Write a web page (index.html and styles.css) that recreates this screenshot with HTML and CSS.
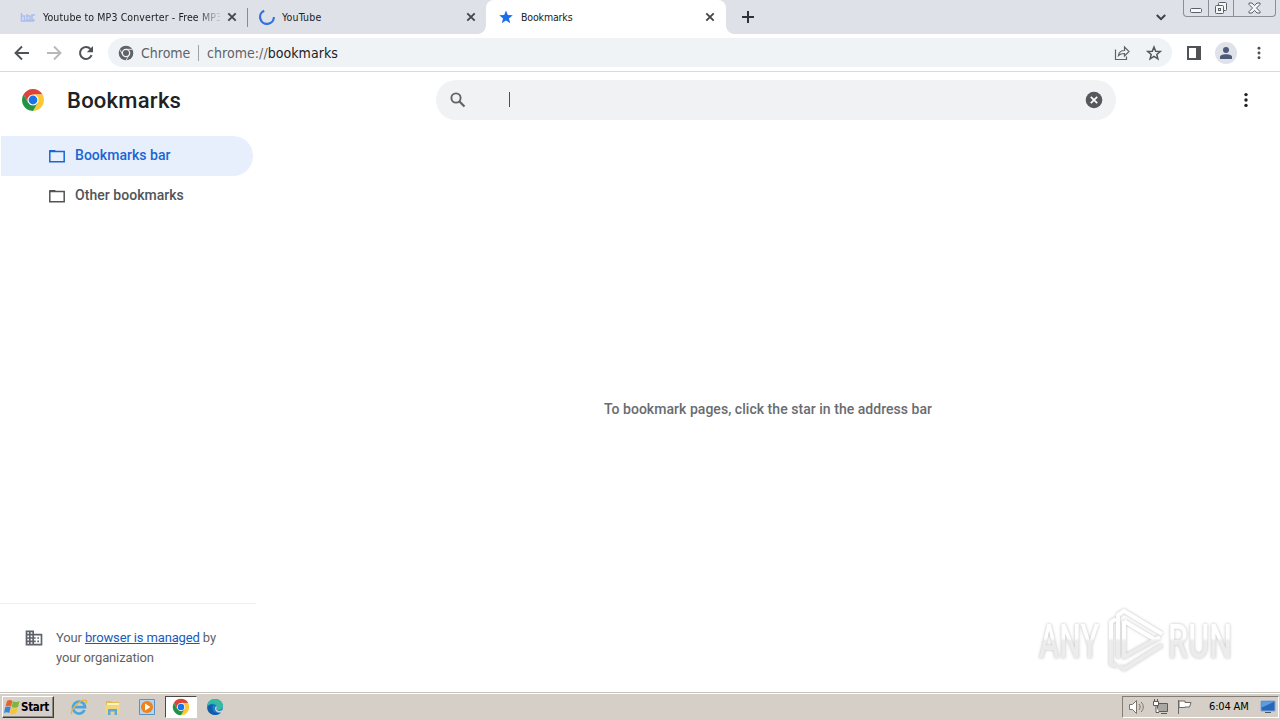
FILE: index.html
```html
<!DOCTYPE html>
<html lang="en">
<head>
  <meta charset="UTF-8">
  <title>Bookmarks</title>
  <link rel="stylesheet" href="styles.css">
</head>
<body>
  <svg class="defs" width="0" height="0">
    <symbol id="close" viewBox="0 0 10 10"><path d="M1.3 1.3l7.4 7.4M8.7 1.3L1.3 8.7" stroke="#45474a" stroke-width="1.9"/></symbol>
    <symbol id="chrome" viewBox="0 0 48 48">
      <circle cx="24" cy="24" r="22" fill="#fff"/>
      <path d="M4.95 13A22 22 0 0 1 43.05 13H24A11 11 0 0 0 14.47 29.5Z" fill="#db4437"/>
      <path d="M4.95 13A22 22 0 0 1 43.05 13H24A11 11 0 0 0 14.47 29.5Z" fill="#fcc934" transform="rotate(120 24 24)"/>
      <path d="M4.95 13A22 22 0 0 1 43.05 13H24A11 11 0 0 0 14.47 29.5Z" fill="#229342" transform="rotate(240 24 24)"/>
      <circle cx="24" cy="24" r="8.8" fill="#1a73e8"/>
    </symbol>
    <symbol id="folder" viewBox="0 0 20 20"><path d="M2.800 5.500h14.400v10.200H2.800z" fill="none" stroke="currentColor" stroke-width="1.500"/><path d="M2 6V4.800C2 4.300 2.400 4 3 4h5l1.600 2z" fill="currentColor"/></symbol>
    <symbol id="dots" viewBox="0 0 4 16"><g fill="currentColor"><circle cx="2" cy="2.6" r="1.7"/><circle cx="2" cy="8" r="1.7"/><circle cx="2" cy="13.4" r="1.7"/></g></symbol>
  </svg>

  <div class="tabstrip">
    <div class="tab first">
      <svg class="favicon" width="16" height="16" viewBox="0 0 16 16"><path d="M1.5 4v8h3V7h-3M7 5v6h3M7 7h3v5M15 6h-3v5h3M1 12h13" fill="none" stroke="#a9bdf0" stroke-width="1.500"/></svg>
      <span class="tab-title fade">Youtube to MP3 Converter - Free MP3</span>
      <svg class="tab-close" width="10" height="10"><use href="#close"/></svg>
    </div>
    <div class="tab second">
      <svg class="favicon" width="16" height="16" viewBox="0 0 16 16"><path d="M5.2 1.7A6.9 6.9 0 1 0 14.9 8" fill="none" stroke="#2f73df" stroke-width="2.200"/></svg>
      <span class="tab-title">YouTube</span>
      <svg class="tab-close" width="10" height="10"><use href="#close"/></svg>
    </div>
    <div class="tab active">
      <svg class="favicon" width="16" height="16" viewBox="0 0 16 16"><path d="M8 1.4l1.8 4.7 5 .2-3.9 3.1 1.4 4.9L8 11.5l-4.3 2.8 1.4-4.9L1.2 6.3l5-.2z" fill="#1a6fee"/></svg>
      <span class="tab-title">Bookmarks</span>
      <svg class="tab-close" width="10" height="10"><use href="#close"/></svg>
    </div>
    <svg class="new-tab" width="12" height="12" viewBox="0 0 12 12"><path d="M6 0v12M0 6h12" stroke="#303236" stroke-width="2"/></svg>
    <svg class="tab-search" width="10" height="7" viewBox="0 0 10 7"><path d="M.8 1l4.2 4.2L9.200 1" fill="none" stroke="#3c4043" stroke-width="2"/></svg>
    <div class="window-buttons">
      <div class="win-btn min"><svg width="13" height="6" viewBox="0 0 13 6"><rect x=".5" y=".5" width="11" height="4" rx="1" fill="#f8f8f9" stroke="#5c5f66"/></svg></div>
      <div class="win-btn max"><svg width="14" height="14" viewBox="0 0 14 14"><g fill="#f4f5f7" stroke="#5c5f66"><rect x="4.500" y="1.500" width="8" height="8" rx="1"/><rect x="1.500" y="4.500" width="8" height="8" rx="1"/><rect x="4.500" y="7.500" width="2" height="2"/></g></svg></div>
      <div class="win-btn shut"><svg width="13" height="12" viewBox="0 0 13 12"><path d="M1 1h3l2.500 2.600L9 1h3v1.500L8.500 6 12 9.500V11H9L6.500 8.400 4 11H1V9.500L4.500 6 1 2.500z" fill="#f4f5f7" stroke="#5c5f66"/></svg></div>
    </div>
  </div>

  <div class="toolbar">
    <svg class="nav back" width="16" height="16" viewBox="0 0 16 16"><path d="M15 8H2M8 1.500L1.500 8 8 14.500" fill="none" stroke="#505356" stroke-width="1.900"/></svg>
    <svg class="nav forward" width="16" height="16" viewBox="0 0 16 16"><path d="M1 8h13M8 1.500L14.500 8 8 14.500" fill="none" stroke="#b7b8ba" stroke-width="1.900"/></svg>
    <svg class="nav reload" width="16" height="16" viewBox="0 0 16 16"><path d="M13.600 10.200A6 6 0 1 1 12.500 4" fill="none" stroke="#505356" stroke-width="2"/><path d="M15 1v6.200H8.800z" fill="#505356"/></svg>
    <div class="omnibox">
      <svg width="16" height="16" viewBox="0 0 48 48"><circle cx="24" cy="24" r="22" fill="#5f6368"/><circle cx="24" cy="24" r="11" fill="none" stroke="#f1f3f4" stroke-width="4"/><path d="M43 13H24M14.500 29.500L5 13M33.500 29.500L24 46" fill="none" stroke="#f1f3f4" stroke-width="2.500"/></svg>
      <span class="scheme">Chrome</span>
      <span class="divider"></span>
      <span class="url">chrome://<b>bookmarks</b></span>
      <svg class="share" width="16" height="16" viewBox="0 0 16 16"><path d="M1.500 4.500v10h11v-3M4.500 10.500c.5-3.500 2.700-5 6-5V2l4.500 4.500-4.500 4.500V8.500c-2.500 0-4.500.4-6 2z" fill="none" stroke="#606266" stroke-width="1.200"/></svg>
      <svg class="star" width="16" height="16" viewBox="0 0 16 16"><path d="M8 2l1.700 4.200 4.500.300-3.400 2.900 1.100 4.400L8 11.400l-3.900 2.400 1.100-4.400-3.400-2.900 4.500-.3z" fill="none" stroke="#54575b" stroke-width="1.500"/></svg>
    </div>
    <svg class="side-panel" width="14" height="14" viewBox="0 0 14 14"><path d="M1 1h12v12H1z" fill="#fff" stroke="#505256" stroke-width="2"/><path d="M9 1h4v12H9z" fill="#505256"/></svg>
    <div class="avatar"><svg width="12" height="12" viewBox="0 0 12 12"><g fill="#4e5a78"><circle cx="6" cy="3" r="3"/><path d="M0 12V10C0 8 3 7.200 6 7.200S12 8 12 10v2z"/></g></svg></div>
    <svg class="menu" width="4" height="14"><use href="#dots"/></svg>
  </div>

  <header class="page-header">
    <svg class="logo" width="24" height="24"><use href="#chrome"/></svg>
    <h1>Bookmarks</h1>
    <div class="search">
      <svg width="16" height="16" viewBox="0 0 16 16"><circle cx="6" cy="6" r="4.600" fill="none" stroke="#606367" stroke-width="1.900"/><path d="M9.200 9.200l5.300 5.300" stroke="#606367" stroke-width="2.200"/></svg>
      <span class="caret"></span>
      <svg class="clear" width="18" height="18" viewBox="0 0 18 18"><circle cx="9" cy="9" r="8.300" fill="#55585c"/><path d="M5.800 5.800l6.400 6.400M12.200 5.800l-6.400 6.400" stroke="#fff" stroke-width="1.700"/></svg>
    </div>
    <svg class="more" width="4" height="16"><use href="#dots"/></svg>
  </header>

  <main class="content">
    <nav class="sidebar">
      <div class="folder selected"><svg width="20" height="20"><use href="#folder"/></svg><span>Bookmarks bar</span></div>
      <div class="folder"><svg width="20" height="20"><use href="#folder"/></svg><span>Other bookmarks</span></div>
      <div class="managed">
        <svg width="20" height="20" viewBox="0 0 24 24"><path d="M12 7V3H2v18h20V7H12zM6 19H4v-2h2v2zm0-4H4v-2h2v2zm0-4H4V9h2v2zm0-4H4V5h2v2zm4 12H8v-2h2v2zm0-4H8v-2h2v2zm0-4H8V9h2v2zm0-4H8V5h2v2zm10 12h-8v-2h2v-2h-2v-2h2v-2h-2V9h8v10zm-2-8h-2v2h2v-2zm0 4h-2v2h2v-2z" fill="#5f6368"/></svg>
        <p>Your <a href="#">browser is managed</a> by<br>your organization</p>
      </div>
    </nav>
    <section class="empty"><span>To bookmark pages, click the star in the address bar</span></section>
  </main>

  <svg class="watermark" width="220" height="72" viewBox="0 0 220 72">
    <defs>
      <linearGradient id="fade" gradientUnits="userSpaceOnUse" x1="0" y1="34" x2="0" y2="37">
        <stop offset="0" stop-color="#fff"/>
        <stop offset="1" stop-color="#ececec"/>
      </linearGradient>
    </defs>
    <g class="mark-text" fill="url(#fade)">
      <text x="9" y="54" textLength="60" lengthAdjust="spacingAndGlyphs">ANY</text>
      <text x="138" y="54" textLength="64" lengthAdjust="spacingAndGlyphs">RUN</text>
    </g>
    <g class="mark-play" stroke="url(#fade)">
      <path d="M86 15L81 18V60L87 62"/>
      <path d="M88 54V11L94 7L132 30M94 17V53L130 33"/>
      <path d="M94 17L124 35"/>
      <path d="M90 62L94 65L132 41"/>
    </g>
  </svg>

  <footer class="taskbar">
    <div class="start">
      <svg width="17" height="16" viewBox="0 0 17 16"><path d="M3 2c2-1.500 4-1 5.500 0L7 7.500C5 6.500 3.500 6.500 1.500 7.500z" fill="#e8632c"/><path d="M9 2.300c2 1 4 1 6.500 0L14 8c-2 1-4 1-6.500 0z" fill="#7cb63c"/><path d="M1.200 8.200c2-1 3.800-1 5.500 0L5.200 14C3.500 13 2 13 0 14z" fill="#3b84d6"/><path d="M7.200 8.700c2 1 4 1 6.500 0l-1.600 5.800c-2 1-4 1-6.400 0z" fill="#f5c631"/></svg>
      <span>Start</span>
    </div>
    <div class="quick">
      <div class="task"><svg width="18" height="18" viewBox="0 0 18 18"><path d="M14.500 12A6 6 0 1 1 15 9.200H5" fill="none" stroke="#4aa6e2" stroke-width="2.700"/><path d="M2 16C-1 13 11 0 16 2.500c1 .6.500 2-.3 3" fill="none" stroke="#e8b53b" stroke-width="1.400"/></svg></div>
      <div class="task"><svg width="18" height="18" viewBox="0 0 18 18"><path d="M2 3h5l1 1h7v11H2z" fill="#dfbd50"/><path d="M3 5h12v4H3z" fill="#fbf2bd"/><path d="M1 7h15v8H1z" fill="#f0d77c"/><path d="M4 17v-6h9v6h-2.500v-3.500h-4V17z" fill="#61a8d8"/></svg></div>
      <div class="task"><svg width="16" height="16" viewBox="0 0 16 16"><path d="M.5.5h15v15H.5z" fill="#b5d5f3" stroke="#5a91c7"/><circle cx="8" cy="8" r="6" fill="#ef8219"/><path d="M6 4.500l5.500 3.500L6 11.500z" fill="#fff"/></svg></div>
      <div class="task current"><svg width="18" height="18"><use href="#chrome"/></svg></div>
      <div class="task"><svg width="18" height="18" viewBox="0 0 18 18"><circle cx="9" cy="9" r="8" fill="#1783cd"/><path d="M1 8C2 3 5 1 9 1c5 0 8 3.500 8 7 0 2.500-2 4-5 4-1.500 0-2-.8-1-2 .5-3-3-5-6-4-2 .6-3 1.500-4 2z" fill="#37b9a2"/><path d="M6.500 8c-1 5 3 8 8.500 6.500C11 19 1 17 1.500 9.500 3 6 6 6 8 7z" fill="#145ba8"/><path d="M10.500 8c1 2-1 2.500.5 4 1.500 1.500 4.500 1 6.500-.5V16l-3-1.500C11 15 8.500 12.500 9 9.500z" fill="#d5cfc7"/></svg></div>
    </div>
    <div class="tray">
      <svg width="18" height="16" viewBox="0 0 18 16"><path d="M1.500 5.500h3l4-4v13l-4-4h-3z" fill="#fff" stroke="#77736e"/><path d="M11 5c1.500 2 1.500 4 0 6M13 3c3 3 3 7 0 10" fill="none" stroke="#77736e"/></svg>
      <svg width="18" height="16" viewBox="0 0 18 16"><path d="M5.500 4.500h10v8h-10z" fill="#a9a7a3" stroke="#5f5c58"/><path d="M1.500 2.500h5v4h-5zM4 6.500v7h3M9 14.500h6" fill="#fff" stroke="#5f5c58"/><path d="M2.500 0v3M5.500 0v3" stroke="#5f5c58"/></svg>
      <svg width="18" height="16" viewBox="0 0 18 16"><path d="M2.500 1v14M3 2h6v1.500h6L13.500 8H9V8.500H3z" fill="#fff" stroke="#6d6964"/></svg>
      <span class="clock">6:04 AM</span>
      <svg class="desktop" width="16" height="14" viewBox="0 0 16 14"><path d="M1 1h14v10H1z" fill="#2767ba" stroke="#81a7d3"/><path d="M1.500 1.500h13L3 7H1.500z" fill="#5b9de0"/><path d="M5 12.500h6" stroke="#495667"/></svg>
    </div>
  </footer>
</body>
</html>
```
FILE: styles.css
```css
* {
  box-sizing: border-box;
}

body {
  margin: 0;
  width: 1280px;
  height: 720px;
  display: flex;
  flex-direction: column;
  overflow: hidden;
  position: relative;
  background: #fff;
  color: #202124;
  font-family: Roboto, "Liberation Sans", sans-serif;
}

svg {
  display: block;
  flex: none;
}

.defs {
  position: absolute;
}

/* tabs */
.tabstrip {
  height: 34px;
  display: flex;
  align-items: center;
  background: #dee1e8;
  font-family: "DejaVu Sans Condensed", "DejaVu Sans", sans-serif;
  font-size: 10.5px;
  letter-spacing: -0.15px;
  flex: none;
}

.tab {
  display: flex;
  align-items: center;
  height: 34px;
}

.tab-title {
  flex: 1;
  margin-left: 7px;
  white-space: nowrap;
  overflow: hidden;
}

.tab-title.fade {
  margin-right: 7px;
  letter-spacing: 0.11px;
  -webkit-mask-image: linear-gradient(to right, #000 153px, transparent 180px);
  mask-image: linear-gradient(to right, #000 153px, transparent 180px);
}

.first {
  width: 248px;
  padding: 0 11px 0 20px;
  background: linear-gradient(#888b92, #888b92) right center / 1px 19px no-repeat;
}

.second {
  width: 238px;
  padding: 0 10px 0 11px;
}

.second .tab-title {
  letter-spacing: 0.2px;
}

.active {
  position: relative;
  width: 240px;
  padding: 0 11px 0 12px;
  background: #fff;
  border-radius: 8px 8px 0 0;
}

.active::before,
.active::after {
  content: "";
  position: absolute;
  bottom: 0;
  width: 8px;
  height: 8px;
}

.active::before {
  left: -8px;
  background: radial-gradient(circle at 0 0, transparent 7.5px, #fff 8px);
}

.active::after {
  right: -8px;
  background: radial-gradient(circle at 100% 0, transparent 7.5px, #fff 8px);
}

.new-tab {
  margin-left: 16px;
}

.tab-search {
  margin-left: auto;
}

.window-buttons {
  display: flex;
  align-self: flex-start;
  width: 93px;
  height: 17px;
  margin: 0 4px 0 17px;
  border: 1px solid #8b8e96;
  border-top: 0;
  border-radius: 0 0 4px 4px;
}

.win-btn {
  display: flex;
  align-items: center;
  justify-content: center;
  width: 25px;
  border-right: 1px solid #8b8e96;
}

.min {
  padding-top: 5px;
}

.shut {
  width: 41px;
  border: 0;
}

/* toolbar */
.toolbar {
  display: flex;
  align-items: center;
  height: 38px;
  padding: 0 19px 0 14px;
  border-bottom: 1px solid #d8dadd;
  flex: none;
}

.nav {
  margin-right: 16px;
}

.reload {
  margin-right: 14px;
}

.omnibox {
  display: flex;
  align-items: center;
  width: 1064px;
  height: 29px;
  padding: 0 10px;
  border-radius: 15px;
  background: #f0f3f6;
  font-family: "DejaVu Sans Condensed", "DejaVu Sans", sans-serif;
  font-weight: 200;
  font-size: 14px;
  flex: none;
}

.scheme {
  width: 50px;
  margin-left: 7px;
  color: #5f6368;
}

.divider {
  width: 1px;
  height: 16px;
  margin: 0 8px 0 7px;
  background: #9fa2a6;
}

.url {
  color: #5f6368;
  letter-spacing: 0.05px;
}

.url b {
  color: #202124;
  font-weight: inherit;
}

.share {
  margin: 0 16px 0 auto;
}

.side-panel {
  margin-left: 15px;
}

.avatar {
  display: flex;
  align-items: center;
  justify-content: center;
  width: 22px;
  height: 22px;
  margin: 0 20px 0 14px;
  border-radius: 50%;
  background: #dfe2e8;
}

.menu {
  color: #505356;
}

/* page header */
.page-header {
  display: flex;
  align-items: center;
  height: 56px;
  padding: 0 32px 0 21px;
  flex: none;
}

h1 {
  width: 369px;
  margin: 0 0 0 22px;
  font-size: 22px;
  font-weight: 500;
  letter-spacing: 0.25px;
}

.search {
  display: flex;
  align-items: center;
  width: 680px;
  height: 40px;
  padding: 0 13px 0 14px;
  border-radius: 20px;
  background: #f0f2f4;
}

.caret {
  width: 1px;
  height: 15px;
  margin: 0 0 1px 43px;
  background: #245797;
}

.clear {
  margin-left: auto;
}

.more {
  margin-left: auto;
}

.content {
  display: flex;
  flex: 1;
}

.sidebar {
  display: flex;
  flex-direction: column;
  width: 256px;
  padding-top: 8px;
}

.folder {
  display: flex;
  align-items: center;
  gap: 8px;
  width: 252px;
  height: 40px;
  margin-left: 1px;
  padding-left: 46px;
  border-radius: 0 20px 20px 0;
  color: #515458;
  font-size: 14px;
  font-weight: 500;
}

.folder span {
  padding-bottom: 2px;
  letter-spacing: 0.04px;
}

.selected {
  background: #e7eefc;
  color: #1967d2;
}

.managed {
  display: flex;
  gap: 12px;
  height: 89px;
  margin-top: auto;
  padding: 24px 0 0 24px;
  border-top: 1px solid #eeeff0;
  color: #5f6368;
  font-size: 13px;
  letter-spacing: -0.14px;
  line-height: 20px;
}

.managed p {
  margin: 0;
}

.managed a {
  color: #185abc;
}

.empty {
  display: flex;
  align-items: center;
  justify-content: center;
  flex: 1;
  padding-bottom: 2px;
  color: #696c70;
  font-size: 14px;
  font-weight: 500;
  letter-spacing: 0.04px;
}

/* watermark over the page */
.watermark {
  position: absolute;
  left: 1030px;
  top: 604px;
  filter: drop-shadow(0 0 1.5px #bdbdbd);
}

.mark-text {
  font-size: 49px;
  font-weight: 500;
}

.mark-play {
  fill: none;
  stroke-width: 4;
  stroke-linejoin: round;
}

/* taskbar */
.taskbar {
  display: flex;
  align-items: center;
  height: 28px;
  padding: 0 1px 0 2px;
  border-top: 1px solid #c5c2bc;
  box-shadow: inset 0 1px #fff;
  background: #d5cfc7;
  color: #000;
  font-family: "DejaVu Sans Condensed", "DejaVu Sans", sans-serif;
  flex: none;
}

.start {
  display: flex;
  align-items: center;
  width: 52px;
  height: 22px;
  padding-left: 1px;
  border: 1px solid;
  border-color: #fff #3f3d3a #3f3d3a #fff;
  box-shadow: inset -1px -1px #8b8782;
  font-size: 11.5px;
  font-weight: bold;
  letter-spacing: -0.3px;
}

.quick {
  display: flex;
  gap: 2px;
  margin-left: 9px;
}

.task {
  display: flex;
  align-items: center;
  justify-content: center;
  width: 32px;
  height: 22px;
}

.current {
  background: #fff;
  border: 1px solid;
  border-color: #4b4946 #fff #fff #4b4946;
}

.tray {
  display: flex;
  align-items: center;
  gap: 6px;
  width: 157px;
  height: 22px;
  margin-left: auto;
  padding-left: 5px;
  border: 1px solid;
  border-color: #817d77 #fff #fff #817d77;
}

.clock {
  width: 43px;
  margin-left: 9px;
  font-size: 11px;
  letter-spacing: -0.15px;
  white-space: nowrap;
}

.desktop {
  margin-left: 2px;
}
```
